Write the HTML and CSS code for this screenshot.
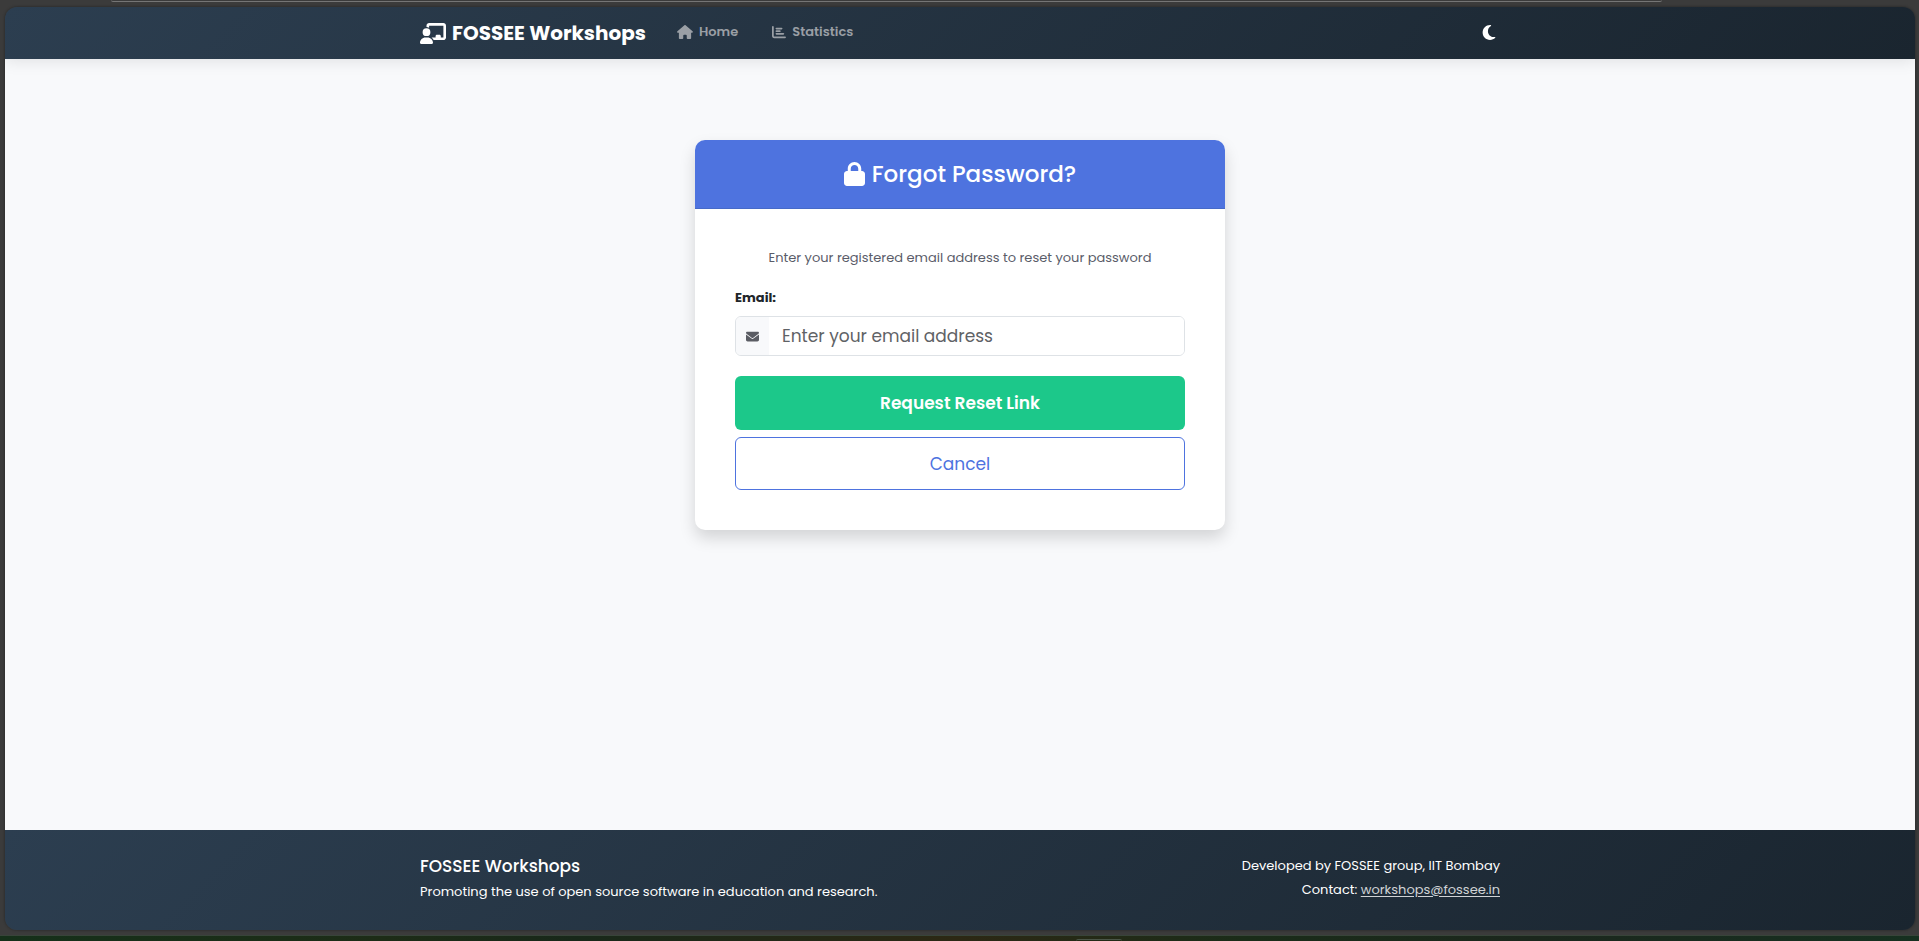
FILE: index.html
```html
<!DOCTYPE html>
<html lang="en">
<head>
<meta charset="utf-8">
<title>Forgot Password - FOSSEE Workshops</title>
<link rel="stylesheet" href="styles.css">
</head>
<body>
<div class="frame-edge"></div>
<div class="window">
  <header class="navbar">
    <div class="container navbar-inner">
      <a class="brand" href="#">
        <svg class="icon-brand" viewBox="0 0 640 512" aria-hidden="true"><path d="M160 64c0-35.3 28.7-64 64-64L576 0c35.3 0 64 28.7 64 64l0 288c0 35.3-28.7 64-64 64l-239.2 0c-11.8-25.5-29.9-47.5-52.4-64l99.6 0 0-32c0-17.7 14.3-32 32-32l64 0c17.7 0 32 14.3 32 32l0 32 64 0 0-288L224 64l0 49.1C205.2 102.2 183.3 96 160 96l0-32zm0 64a96 96 0 1 1 0 192 96 96 0 1 1 0-192zM133.3 352l53.3 0C260.3 352 320 411.7 320 485.3c0 14.7-11.9 26.7-26.7 26.7L26.7 512C11.9 512 0 500.1 0 485.3C0 411.7 59.7 352 133.3 352z"/></svg>
        <span>FOSSEE Workshops</span>
      </a>
      <nav class="nav">
        <a class="nav-link" href="#">
          <svg class="icon-home" viewBox="0 0 576 512" aria-hidden="true"><path d="M575.8 255.5c0 18-15 32.1-32 32.1h-32l.7 160.2c0 2.7-.2 5.4-.5 8.1V472c0 22.1-17.9 40-40 40H456c-1.1 0-2.2 0-3.3-.1c-1.4 .1-2.8 .1-4.2 .1H416 392c-22.1 0-40-17.9-40-40V448 384c0-17.7-14.3-32-32-32H256c-17.7 0-32 14.3-32 32v64 24c0 22.1-17.9 40-40 40H160 128.1c-1.5 0-3-.1-4.5-.2c-1.2 .1-2.4 .2-3.6 .2H104c-22.1 0-40-17.9-40-40V360c0-.9 0-1.9 .1-2.8V287.6H32c-18 0-32-14-32-32.1c0-9 3-17 10-24L266.4 8c7-7 15-8 22-8s15 2 21 7L564.8 231.5c8 7 12 15 11 24z"/></svg>
          <span>Home</span>
        </a>
        <a class="nav-link" href="#">
          <svg class="icon-small" viewBox="0 0 512 512" aria-hidden="true"><path d="M32 32c17.7 0 32 14.3 32 32V400c0 8.8 7.2 16 16 16H480c17.7 0 32 14.3 32 32s-14.3 32-32 32H80c-44.2 0-80-35.8-80-80V64C0 46.3 14.3 32 32 32zm96 96c0-17.7 14.3-32 32-32l192 0c17.7 0 32 14.3 32 32s-14.3 32-32 32H160c-17.7 0-32-14.3-32-32zm32 64H288c17.7 0 32 14.3 32 32s-14.3 32-32 32H160c-17.7 0-32-14.3-32-32s14.3-32 32-32zm0 96H416c17.7 0 32 14.3 32 32s-14.3 32-32 32H160c-17.7 0-32-14.3-32-32s14.3-32 32-32z"/></svg>
          <span>Statistics</span>
        </a>
      </nav>
      <button class="theme-toggle" type="button" aria-label="Toggle dark mode">
        <svg class="icon-moon" viewBox="0 0 384 512" aria-hidden="true"><path d="M223.5 32C100 32 0 132.3 0 256S100 480 223.5 480c60.6 0 115.5-24.2 155.8-63.4c5-4.9 6.3-12.5 3.1-18.7s-10.1-9.7-17-8.5c-9.8 1.7-19.8 2.6-30.1 2.6c-96.9 0-175.5-78.8-175.5-176c0-65.8 36-123.1 89.3-153.3c6.1-3.5 9.2-10.5 7.7-17.3s-7.3-11.9-14.3-12.5c-6.3-.5-12.6-.8-19-.8z"/></svg>
      </button>
    </div>
  </header>

  <main class="main">
    <section class="card">
      <div class="card-header">
        <svg class="icon-lock" viewBox="0 0 448 512" aria-hidden="true"><path d="M144 144v48H304V144c0-44.2-35.8-80-80-80s-80 35.8-80 80zM80 192V144C80 64.5 144.5 0 224 0s144 64.5 144 144v48h16c35.3 0 64 28.7 64 64V448c0 35.3-28.7 64-64 64H64c-35.3 0-64-28.7-64-64V256c0-35.3 28.7-64 64-64H80z"/></svg>
        <h1 class="card-title">Forgot Password?</h1>
      </div>
      <form class="card-body">
        <p class="hint">Enter your registered email address to reset your password</p>
        <label class="label" for="email">Email:</label>
        <div class="input-group">
          <span class="input-addon">
            <svg class="icon-mail" viewBox="0 0 512 512" aria-hidden="true"><path d="M48 64C21.5 64 0 85.5 0 112c0 15.1 7.1 29.3 19.2 38.4L236.8 313.6c11.4 8.5 27 8.5 38.4 0L492.8 150.4c12.1-9.1 19.2-23.3 19.2-38.4c0-26.5-21.5-48-48-48H48zM0 176V384c0 35.3 28.7 64 64 64H448c35.3 0 64-28.7 64-64V176L294.4 339.2c-22.8 17.1-54 17.1-76.8 0L0 176z"/></svg>
          </span>
          <input class="input" id="email" type="email" placeholder="Enter your email address">
        </div>
        <button class="btn btn-success" type="submit">Request Reset Link</button>
        <button class="btn btn-outline" type="button">Cancel</button>
      </form>
    </section>
  </main>

  <footer class="footer">
    <div class="container footer-inner">
      <div>
        <h2 class="footer-title">FOSSEE Workshops</h2>
        <p class="footer-text">Promoting the use of open source software in education and research.</p>
      </div>
      <div class="footer-right">
        <p class="footer-text">Developed by FOSSEE group, IIT Bombay</p>
        <p class="footer-text">Contact: <a class="footer-link" href="mailto:workshops@fossee.in">workshops@fossee.in</a></p>
      </div>
    </div>
  </footer>
</div>
<div class="desktop"><span class="desktop-handle"></span></div>
</body>
</html>
```

FILE: styles.css
```css
* {
  box-sizing: border-box;
}

body {
  margin: 0;
  min-height: 100vh;
  display: flex;
  flex-direction: column;
  background: #3b3b3b;
  font-family: Poppins, Inter, "Open Sans", sans-serif;
  font-size: 13px;
  line-height: 24px;
  color: #212529;
}

h1, h2, p {
  margin: 0;
}

svg {
  display: block;
  flex: none;
  fill: currentColor;
}

/* Surrounding browser frame */
.frame-edge {
  height: 2px;
  margin: 0 257px 5px 111px;
  border-bottom: 1px solid #757575;
  border-radius: 0 0 6px 6px;
}

.window {
  flex: 1;
  display: flex;
  flex-direction: column;
  margin: 0 4px 5px 5px;
  border-radius: 12px;
  overflow: hidden;
  box-shadow: 0 0 3px rgba(0, 0, 0, 0.4);
}

.desktop {
  height: 6px;
  display: flex;
  justify-content: center;
  align-items: flex-end;
  padding-left: 279px;
  border-top: 1px solid #38443a;
  background: linear-gradient(90deg, #15301a 0%, #1d2c17 20%, #18281a 30%, #2c2814 50%, #1a2c19 65%, #1b271d 80%, #163020 100%);
}

.desktop-handle {
  width: 46px;
  height: 2px;
  border-top: 1px solid #4a5548;
  border-radius: 3px 3px 0 0;
}

.container {
  width: 100%;
  max-width: 1080px;
  margin: 0 auto;
}

/* Navigation */
.navbar {
  position: relative;
  background: linear-gradient(135deg, #2c3e50, #1a252f);
  box-shadow: 0 2px 15px rgba(0, 0, 0, 0.1);
}

.navbar-inner {
  display: flex;
  align-items: center;
  height: 52px;
  padding-bottom: 2px;
}

.brand {
  display: flex;
  align-items: center;
  gap: 6px;
  margin-right: 31px;
  padding-top: 2px;
  color: #fff;
  font-size: 20px;
  font-weight: 700;
  text-decoration: none;
}

.icon-brand {
  width: 26px;
  height: 21px;
}

.nav {
  display: flex;
  gap: 34px;
}

.nav-link {
  display: flex;
  align-items: center;
  gap: 6px;
  color: #9a9fa5;
  font-weight: 600;
  text-decoration: none;
}

.icon-home {
  width: 16px;
  height: 14px;
}

.icon-small {
  width: 14px;
  height: 14px;
}

.theme-toggle {
  margin-left: auto;
  padding: 0 4px;
  border: 0;
  background: none;
  color: #fff;
}

.icon-moon {
  width: 14px;
  height: 17px;
}

/* Card */
.main {
  flex: 1;
  padding-top: 81px;
  background: #f8f9fb;
}

.card {
  width: 100%;
  max-width: 530px;
  margin: 0 auto;
  border-radius: 10px;
  background: #fff;
  box-shadow: 0 8px 16px rgba(0, 0, 0, 0.15);
}

.card-header {
  display: flex;
  align-items: center;
  justify-content: center;
  gap: 7px;
  height: 69px;
  border-bottom: 1px solid #466ac8;
  border-radius: 10px 10px 0 0;
  background: #4e73df;
  color: #fff;
}

.icon-lock {
  width: 21px;
  height: 24px;
}

.card-title {
  font-size: 23px;
  font-weight: 500;
  line-height: 32px;
}

.card-body {
  display: flex;
  flex-direction: column;
  padding: 37px 40px 40px;
}

.hint {
  margin-bottom: 16px;
  color: #5a5c69;
  text-align: center;
}

.label {
  margin-bottom: 6px;
  font-weight: 700;
}

.input-group {
  display: flex;
  height: 40px;
  margin-bottom: 20px;
  border: 1px solid #dee2e6;
  border-radius: 6px;
  overflow: hidden;
}

.input-addon {
  display: flex;
  align-items: center;
  justify-content: center;
  width: 33px;
  background: #f8f9fb;
  color: #5a5c63;
}

.icon-mail {
  width: 13px;
  height: 13px;
}

.input {
  flex: 1;
  min-width: 0;
  padding: 0 13px;
  border: 0;
  background: #fff;
  font-family: inherit;
  font-size: 17px;
  color: #212529;
}

.input::placeholder {
  color: #5f6266;
  opacity: 1;
}

.btn {
  height: 54px;
  font-family: inherit;
  font-size: 17px;
  border-radius: 6px;
}

.btn-success {
  margin-bottom: 7px;
  border: 0;
  background: #1cc88a;
  color: #fff;
  font-weight: 600;
}

.btn-outline {
  height: 53px;
  border: 1px solid #4e73df;
  background: #fff;
  color: #4e73df;
  font-weight: 400;
}

/* Footer */
.footer {
  background: linear-gradient(135deg, #2c3e50, #1a252f);
  color: #fff;
}

.footer-inner {
  display: flex;
  justify-content: space-between;
  height: 100px;
  padding-top: 24px;
}

.footer-title {
  margin-bottom: 2px;
  font-size: 17px;
  font-weight: 500;
  line-height: 24px;
}

.footer-right {
  text-align: right;
}

.footer-link {
  color: #d0d3d6;
  text-underline-offset: 2px;
}
```
